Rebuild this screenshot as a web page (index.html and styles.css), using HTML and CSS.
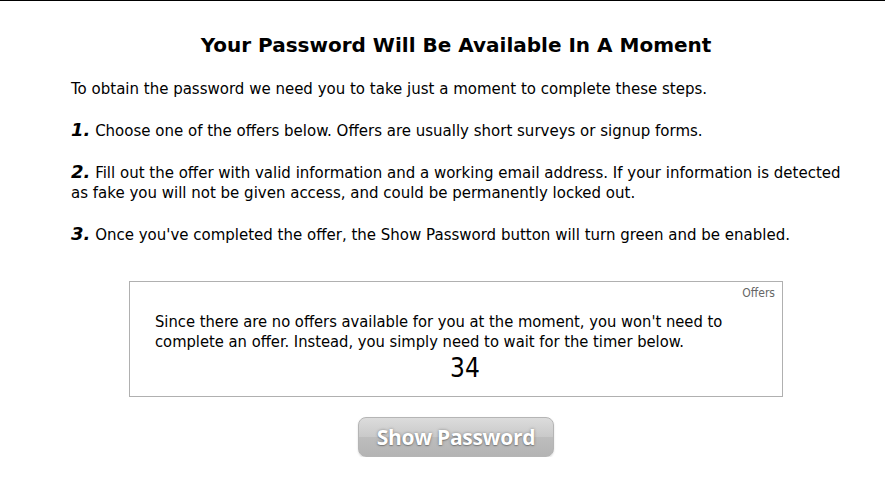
FILE: index.html
```html
<!DOCTYPE html>
<html lang="en">
<head>
  <meta charset="UTF-8">
  <title>Your Password Will Be Available In A Moment</title>
  <link rel="stylesheet" href="styles.css">
</head>
<body>

  <div class="page">
    <h1 class="title">Your Password Will Be Available In A Moment</h1>

    <p>To obtain the password we need you to take just a moment to complete these steps.</p>

    <p><span class="num">1.</span> Choose one of the offers below. Offers are usually short surveys or signup forms.</p>

    <p><span class="num">2.</span> Fill out the offer with valid information and a working email address. If your information is detected as fake you will not be given access, and could be permanently locked out.</p>

    <p><span class="num">3.</span> Once you've completed the offer, the Show Password button will turn green and be enabled.</p>

    <div class="offers">
      <div class="offers-label">Offers</div>
      <div class="offers-text">Since there are no offers available for you at the moment, you won't need to complete an offer. Instead, you simply need to wait for the timer below.</div>
      <div class="timer" id="timer">34</div>
    </div>

    <div class="actions">
      <button class="show-btn" disabled>Show Password</button>
    </div>
  </div>

</body>
</html>
```

FILE: styles.css
```css
body {
  margin: 0;
  border-top: 1px solid #000;
  background: #fff;
  color: #000;
  font-family: "DejaVu Sans", Verdana, sans-serif;
}
.page {
  width: 770px;
  margin-left: 71px;
}
.title {
  margin: 32px 0 22px;
  text-align: center;
  font-size: 20px;
  font-weight: bold;
}
p {
  margin: 0 0 22px;
  font-size: 15px;
  line-height: 20px;
}
.num {
  font-size: 18px;
  line-height: 1;
  font-weight: bold;
  font-style: italic;
}
.offers {
  width: 654px;
  margin: 36px auto 0;
  border: 1px solid #b0b0b0;
  padding: 4px 7px 12px 25px;
  box-sizing: border-box;
}
.offers-label {
  text-align: right;
  font-family: "DejaVu Sans Condensed", "DejaVu Sans", sans-serif;
  font-size: 12px;
  color: #666;
  line-height: 14px;
}
.offers-text {
  margin-top: 12px;
  font-family: "DejaVu Sans Condensed", "DejaVu Sans", sans-serif;
  font-size: 16.4px;
  line-height: 20px;
}
.timer {
  text-align: center;
  font-family: "DejaVu Sans Condensed", "DejaVu Sans", sans-serif;
  font-size: 26px;
  line-height: 32px;
}
.actions {
  display: flex;
  justify-content: center;
  margin-top: 20px;
}
.show-btn {
  width: 196px;
  height: 40px;
  border: 1px solid #b5b5b5;
  border-radius: 8px;
  background: linear-gradient(#dcdcdc, #c9c9c9 50%, #bdbdbd 51%, #b4b4b4);
  color: #fff;
  font-family: "Open Sans", sans-serif;
  font-size: 21px;
  font-weight: bold;
  letter-spacing: -0.3px;
  text-shadow: 0 0 3px rgba(0, 0, 0, 0.35), 0 1px 1px rgba(0, 0, 0, 0.25);
  box-shadow: 0 1px 2px rgba(0, 0, 0, 0.15);
}
```
